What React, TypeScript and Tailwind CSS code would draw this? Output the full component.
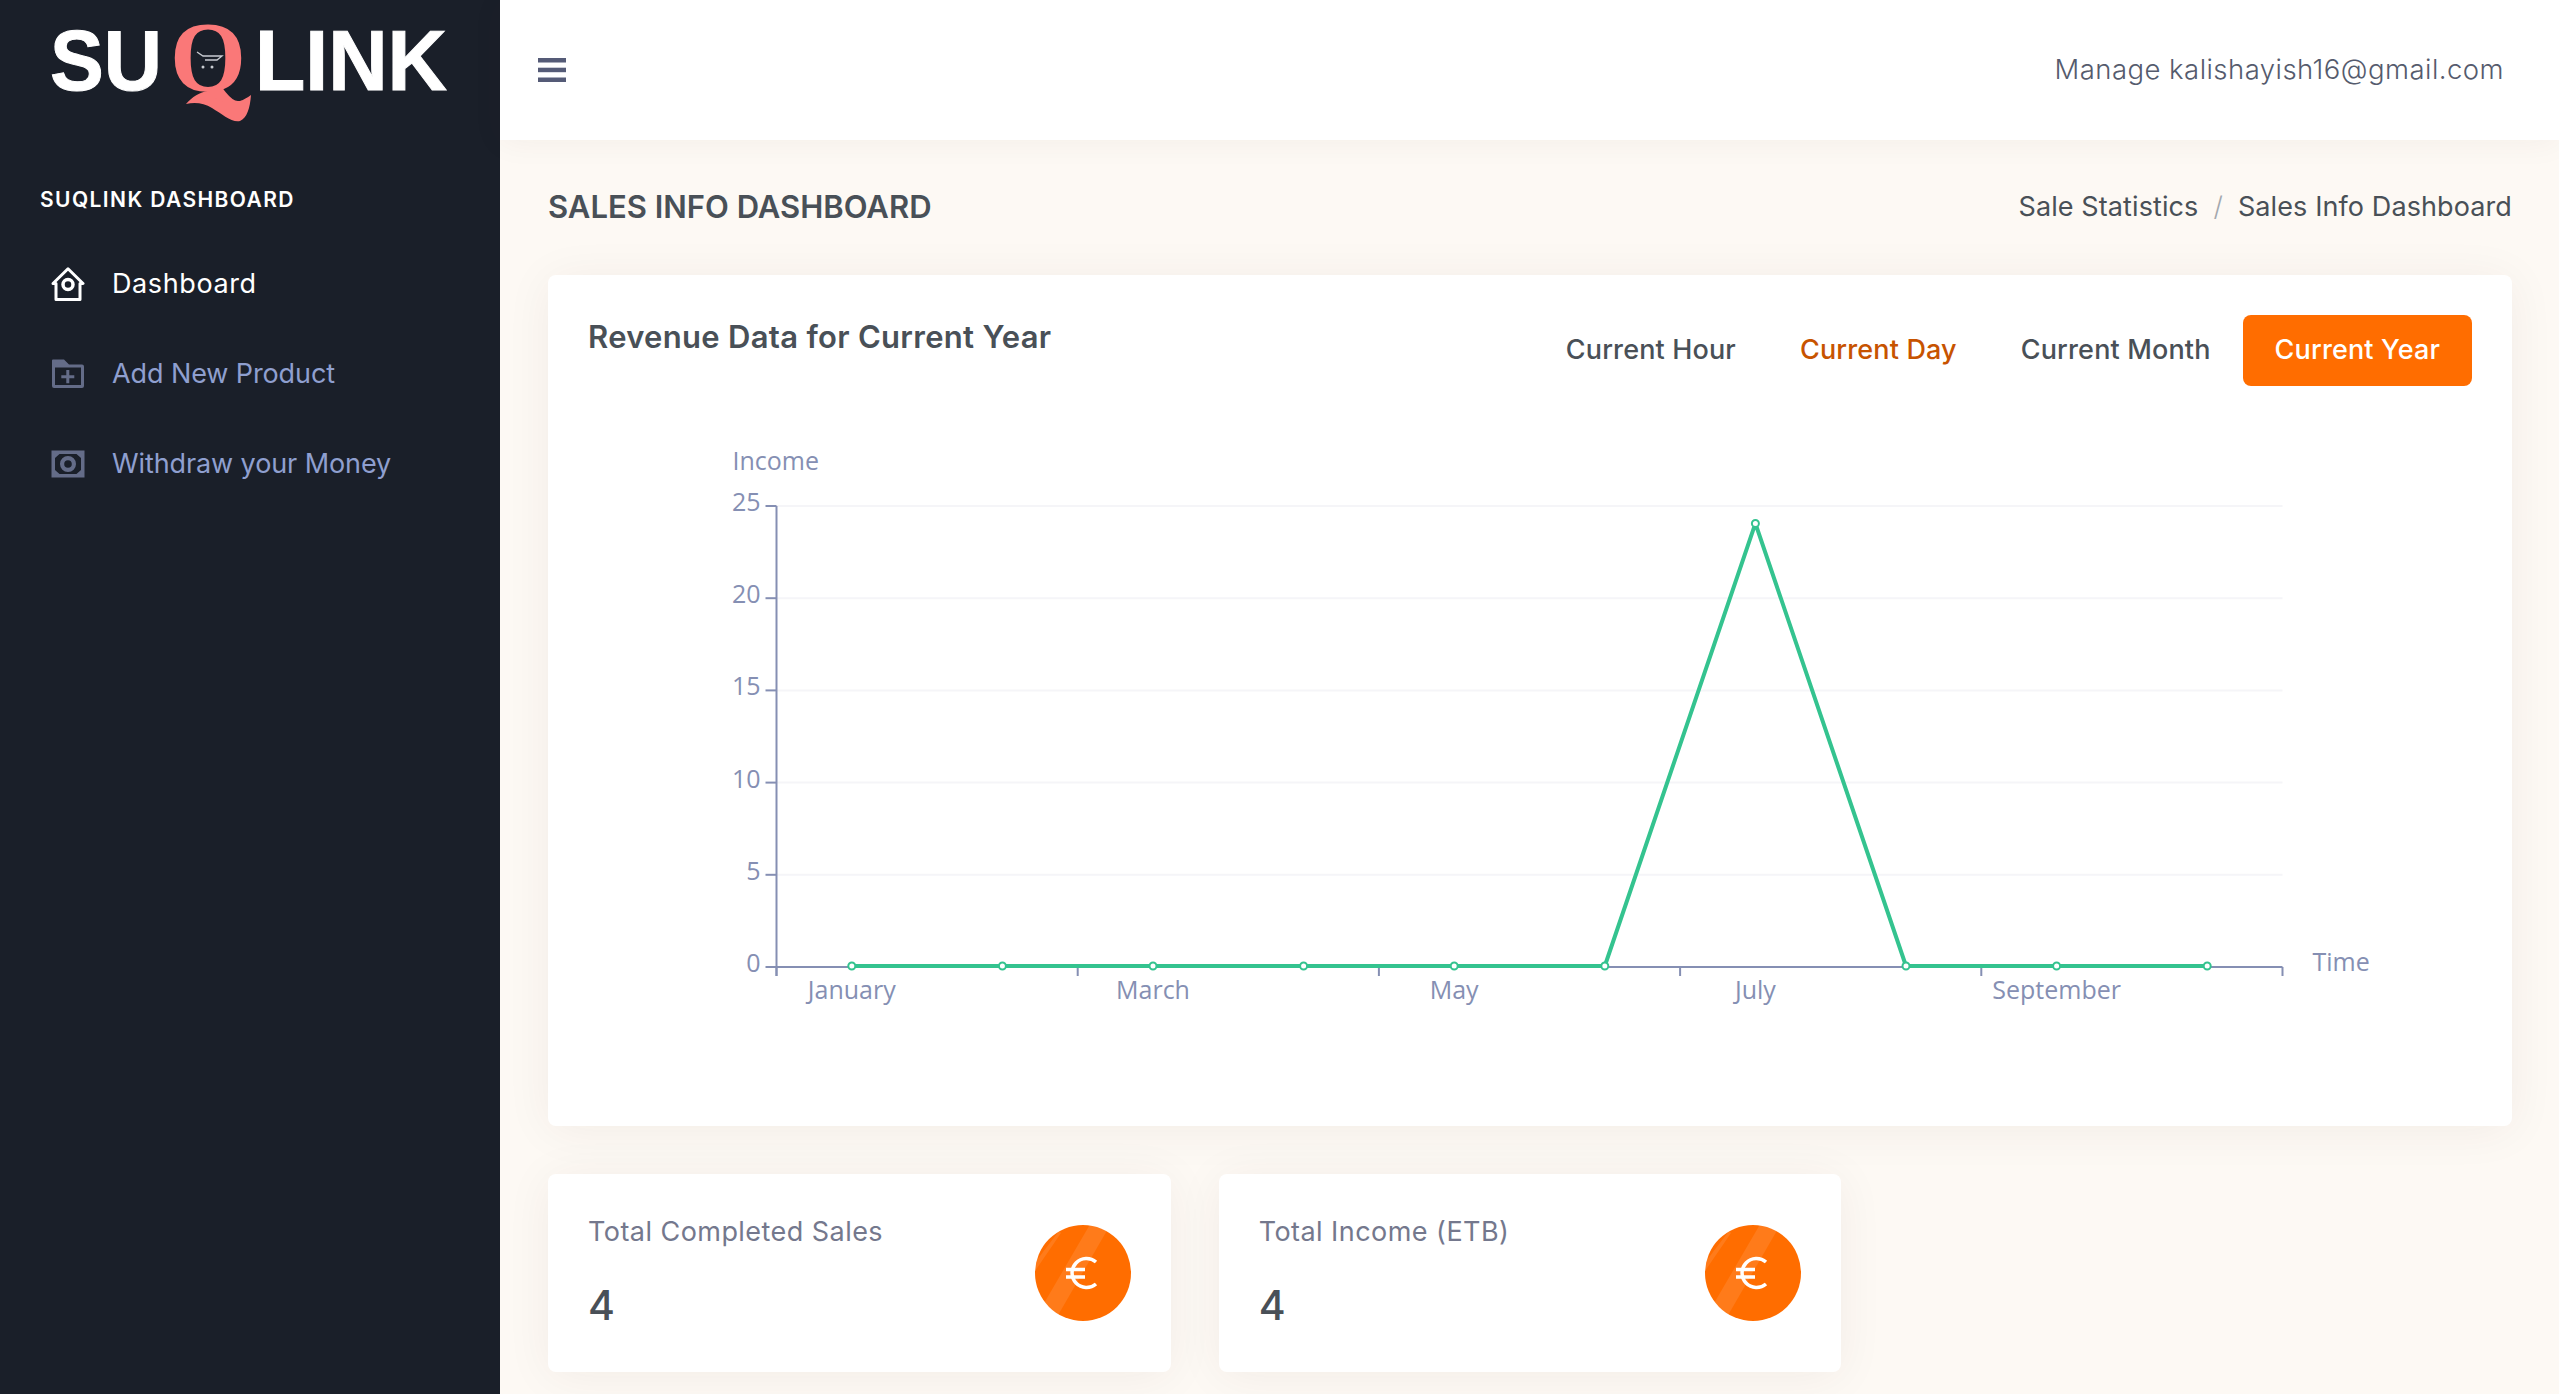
import React from "react";

const months = ["January", "March", "May", "July", "September"];
const yTicks = [0, 5, 10, 15, 20, 25];
const values = [0, 0, 0, 0, 0, 0, 24, 0, 0, 0];

const X0 = 777;
const Y0 = 967;
const STEP_X = 150.6;
const STEP_Y = 92.2;

const pointX = (i: number) => X0 + STEP_X * (i + 0.5);
const pointY = (v: number) => Y0 - 1 - (v / 5) * STEP_Y;

const Logo = () => (
  <svg viewBox="0 0 500 140" className="w-[500px] h-[140px]">
    <text x="50" y="90" fill="#fff" stroke="#fff" strokeWidth="1" fontFamily="Liberation Sans" fontWeight="700" fontSize="86" textLength="112" lengthAdjust="spacingAndGlyphs">
      SU
    </text>
    <text x="170" y="90" fill="#fa7878" fontFamily="Liberation Serif" fontWeight="700" fontSize="100" textLength="76" lengthAdjust="spacingAndGlyphs">
      Q
    </text>
    <path
      d="M186 104C192 97 200 92 208 91L214 97C222 103 235 107 251 95C250 108 247 118 240 121C232 123 222 114 212 108C204 103 195 102 186 104Z"
      fill="#fa7878"
    />
    <path d="M197 52l6 4h19l-5 4h-12" fill="none" stroke="#c9ccd2" strokeWidth="1.3" />
    <circle cx="203" cy="67" r="1.500" fill="#c9ccd2" />
    <circle cx="212" cy="67" r="1.500" fill="#c9ccd2" />
    <text x="255" y="90" fill="#fff" stroke="#fff" strokeWidth="1" fontFamily="Liberation Sans" fontWeight="700" fontSize="86" textLength="192" lengthAdjust="spacingAndGlyphs">
      LINK
    </text>
  </svg>
);

const HomeIcon = () => (
  <svg viewBox="0 0 34 34" className="w-[34px] h-[34px]" fill="none" stroke="#fff" strokeWidth="3" strokeLinejoin="round">
    <path d="M2 16.500L17 1.800l15 14.700h-3v16H5v-16z" />
    <circle cx="17" cy="17.500" r="5" strokeWidth="3.500" />
  </svg>
);

const FolderIcon = () => (
  <svg viewBox="0 0 34 30" className="w-[34px] h-[30px]" fill="#646c88">
    <path
      fillRule="evenodd"
      d="M1 1.500a1 1 0 0 1 1-1h11l5 5h13a2 2 0 0 1 2 2V27a2 2 0 0 1-2 2H3a2 2 0 0 1-2-2V1.500zm3 7V26h26V8.500H4z"
    />
    <path d="M15.300 11h3v5.300h5v3h-5v5h-3v-5h-5v-3h5z" />
  </svg>
);

const MoneyIcon = () => (
  <svg viewBox="0 0 34 28" className="w-[34px] h-[28px]" fill="#646c88">
    <path
      fillRule="evenodd"
      d="M0.500 0.500h33v27h-33v-27zm8 3.500L4 8v12l4.500 4h17l4.500-4V8l-4.500-4h-17zM17 6a8 8 0 1 1 0 16 8 8 0 0 1 0-16zm0 4.200a3.800 3.800 0 1 0 0 7.600 3.800 3.800 0 0 0 0-7.600z"
    />
  </svg>
);

const NavItem = ({ icon, label, active }: { icon: React.ReactNode; label: string; active?: boolean }) => (
  <a className={`flex items-center h-[90px] pl-[51px] gap-[27px] text-[27px] ${active ? "text-white tracking-[0.6px]" : "text-[#8f9fcf] tracking-[-0.1px]"}`}>
    <span className="w-[34px] flex justify-center">{icon}</span>
    {label}
  </a>
);

const RevenueChart = () => (
  <svg viewBox="589 386 1883 700" className="w-full h-[700px]" fontFamily="Open Sans" fontSize="25" fill="#858fb3">
    {yTicks.map((t) => {
      const y = Y0 - (t / 5) * STEP_Y;
      return (
        <g key={t}>
          {t > 0 && <line x1={X0} x2="2283" y1={y} y2={y} stroke="#f5f5f8" strokeWidth="2" />}
          <line x1="766" x2={X0} y1={y} y2={y} stroke="#858fb3" strokeWidth="2" />
          <text x="761" y={y + 5} textAnchor="end">
            {t}
          </text>
        </g>
      );
    })}
    <line x1={X0} x2={X0} y1="506" y2="976" stroke="#858fb3" strokeWidth="2" />
    <line x1={X0} x2="2283" y1={Y0} y2={Y0} stroke="#858fb3" strokeWidth="2" />
    {[0, 2, 4, 6, 8, 10].map((i) => {
      const x = X0 + STEP_X * i;
      return <line key={i} x1={x} x2={x} y1={Y0} y2="976" stroke="#858fb3" strokeWidth="2" />;
    })}
    {months.map((m, i) => (
      <text key={m} x={pointX(i * 2)} y="999" textAnchor="middle">
        {m}
      </text>
    ))}
    <text x="733" y="470">
      Income
    </text>
    <text x="2313" y="971">
      Time
    </text>
    <polyline
      points={values.map((v, i) => `${pointX(i)},${pointY(v)}`).join(" ")}
      fill="none"
      stroke="#34c38f"
      strokeWidth="4"
      strokeLinejoin="round"
    />
    {values.map((v, i) => (
      <circle key={i} cx={pointX(i)} cy={pointY(v)} r="3.500" fill="#fff" stroke="#34c38f" strokeWidth="2" />
    ))}
  </svg>
);

const EuroBadge = () => (
  <svg viewBox="0 0 96 96" className="w-24 h-24 shrink-0">
    <defs>
      <clipPath id="coin">
        <circle cx="48" cy="48" r="48" />
      </clipPath>
    </defs>
    <circle cx="48" cy="48" r="48" fill="#ff6d00" />
    <g clipPath="url(#coin)" fill="#fff" fillOpacity="0.1">
      <polygon points="57,-4 74,2 22,92 8,80" />
      <polygon points="24,6 26,8 0,46 -2,40" />
    </g>
    <path d="M61 37A14.500 14.500 0 1 0 61 59" fill="none" stroke="#fff" strokeWidth="3.500" />
    <path d="M31 44.500h19M31 52h19" stroke="#fff" strokeWidth="3.500" />
  </svg>
);

const StatCard = ({ label, value }: { label: string; value: string }) => (
  <div className="h-[198px] bg-white rounded-lg px-10 flex items-center justify-between shadow-[0_4px_48px_rgba(70,40,10,0.06)]">
    <div className="flex flex-col justify-between h-[114px] pb-[1px]">
      <p className="text-[27px] leading-[36px] text-[#74788d] tracking-[0.45px] -mt-[2px]">{label}</p>
      <p className="text-[41px] leading-[48px] text-[#495057] font-medium">{value}</p>
    </div>
    <EuroBadge />
  </div>
);

export default function App() {
  return (
    <div className="flex h-[1394px] overflow-hidden bg-[#fdf9f4] font-['Inter',sans-serif]">
      <aside className="w-[500px] shrink-0 bg-[#1a1f29]">
        <Logo />
        <h6 className="mt-[47px] pl-10 text-[21px] leading-[26px] font-semibold tracking-[1.4px] text-white uppercase">
          Suqlink Dashboard
        </h6>
        <nav className="mt-[26px]">
          <NavItem active icon={<HomeIcon />} label="Dashboard" />
          <NavItem icon={<FolderIcon />} label="Add New Product" />
          <NavItem icon={<MoneyIcon />} label="Withdraw your Money" />
        </nav>
      </aside>
      <main className="flex-1 flex flex-col min-w-0">
        <header className="h-[140px] bg-white flex items-center justify-between pl-[38px] pr-[55px] shadow-[0_2px_30px_rgba(70,40,10,0.05)]">
          <svg viewBox="0 0 28 24" className="w-7 h-6" fill="#555b77">
            <rect width="28" height="4.500" />
            <rect y="9.700" width="28" height="4.500" />
            <rect y="19.500" width="28" height="4.500" />
          </svg>
          <span className="text-[27.500px] font-light text-[#555b6d] tracking-[0.45px]">Manage kalishayish16@gmail.com</span>
        </header>
        <div className="pl-12 pr-[47px]">
          <div className="h-[135px] flex items-center justify-between">
            <h4 className="text-[31px] font-semibold text-[#495057]">SALES INFO DASHBOARD</h4>
            <div className="flex items-center text-[27px] text-[#495057] tracking-[0.1px]">
              <span>Sale Statistics</span>
              <span className="mx-[15px] font-light text-[#a3a8ae]">/</span>
              <span>Sales Info Dashboard</span>
            </div>
          </div>
          <section className="h-[851px] bg-white rounded-lg p-10 shadow-[0_4px_48px_rgba(70,40,10,0.06)]">
            <div className="flex justify-between h-[71px]">
              <h5 className="text-[31px] leading-[44px] font-semibold text-[#495057] tracking-[0.3px]">Revenue Data for Current Year</h5>
              <div className="flex items-center text-[27px] font-medium tracking-[0.15px] text-[#495057]">
                <span className="px-8">Current Hour</span>
                <span className="px-8 text-[#c75300]">Current Day</span>
                <span className="px-8">Current Month</span>
                <span className="px-8 h-[71px] flex items-center rounded-lg bg-[#ff6d00] text-white">Current Year</span>
              </div>
            </div>
            <RevenueChart />
          </section>
          <div className="grid grid-cols-3 gap-12 mt-12">
            <StatCard label="Total Completed Sales" value="4" />
            <StatCard label="Total Income (ETB)" value="4" />
          </div>
        </div>
      </main>
    </div>
  );
}
